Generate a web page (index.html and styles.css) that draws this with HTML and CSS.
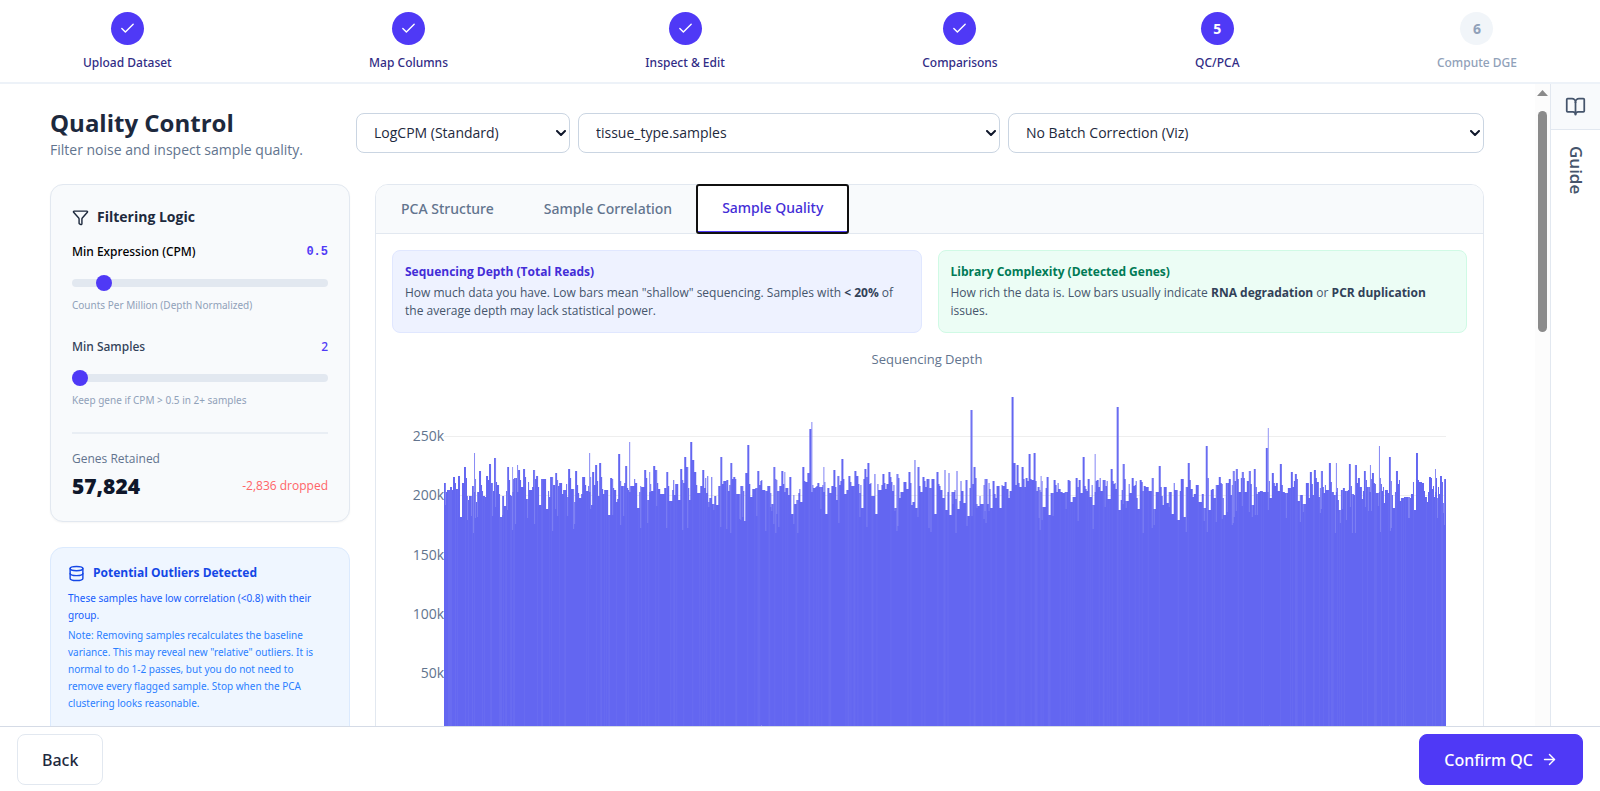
FILE: index.html
```html
<!DOCTYPE html>
<html lang="en">

<head>
	<meta charset="UTF-8">
	<meta name="viewport" content="width=device-width, initial-scale=1">
	<title>Quality Control</title>
	<link rel="stylesheet" href="styles.css">
</head>

<body>
	<header>
		<ol class="steps">
			<li class="step">
				<span class="dot"><svg viewBox="0 0 24 24"><path d="M20 6 9 17l-5-5"/></svg></span>
				<span>Upload Dataset</span>
			</li>
			<li class="step">
				<span class="dot"><svg viewBox="0 0 24 24"><path d="M20 6 9 17l-5-5"/></svg></span>
				<span>Map Columns</span>
			</li>
			<li class="step">
				<span class="dot"><svg viewBox="0 0 24 24"><path d="M20 6 9 17l-5-5"/></svg></span>
				<span>Inspect &amp; Edit</span>
			</li>
			<li class="step">
				<span class="dot"><svg viewBox="0 0 24 24"><path d="M20 6 9 17l-5-5"/></svg></span>
				<span>Comparisons</span>
			</li>
			<li class="step">
				<span class="dot">5</span>
				<span>QC/PCA</span>
			</li>
			<li class="step pending">
				<span class="dot">6</span>
				<span>Compute DGE</span>
			</li>
		</ol>
	</header>

	<div class="workspace">
		<main>
			<div class="topbar">
				<div class="heading">
					<h1>Quality Control</h1>
					<p>Filter noise and inspect sample quality.</p>
				</div>
				<div class="selects">
					<div class="select method">
						<select aria-label="Normalization"><option>LogCPM (Standard)</option></select>
						<svg viewBox="0 0 10 6"><path d="m1 1 4 4 4-4"/></svg>
					</div>
					<div class="select group">
						<select aria-label="Group by"><option>tissue_type.samples</option></select>
						<svg viewBox="0 0 10 6"><path d="m1 1 4 4 4-4"/></svg>
					</div>
					<div class="select batch">
						<select aria-label="Batch correction"><option>No Batch Correction (Viz)</option></select>
						<svg viewBox="0 0 10 6"><path d="m1 1 4 4 4-4"/></svg>
					</div>
				</div>
			</div>

			<div class="columns">
				<aside>
					<section class="card filters">
						<h2>
							<svg class="icon" viewBox="0 0 24 24"><path d="M10 20a1 1 0 0 0 .553.895l2 1A1 1 0 0 0 14 21v-7a2 2 0 0 1 .517-1.341L21.74 4.67A1 1 0 0 0 21 3H3a1 1 0 0 0-.742 1.67l7.225 7.989A2 2 0 0 1 10 14z"/></svg>
							Filtering Logic
						</h2>
						<div class="field">
							<div class="row">
								<label class="strong" for="cpm">Min Expression (CPM)</label>
								<output class="mono" for="cpm">0.5</output>
							</div>
							<input type="range" id="cpm" min="0" max="5" step="0.1" value="0.5">
							<p class="hint">Counts Per Million (Depth Normalized)</p>
						</div>
						<div class="field">
							<div class="row">
								<label for="samples">Min Samples</label>
								<output for="samples">2</output>
							</div>
							<input type="range" id="samples" min="2" max="50" value="2">
							<p class="hint">Keep gene if CPM &gt; 0.5 in 2+ samples</p>
						</div>
						<div class="retained">
							<p>Genes Retained</p>
							<div class="row">
								<strong>57,824</strong>
								<span class="dropped">-2,836 dropped</span>
							</div>
						</div>
					</section>

					<section class="card outliers">
						<h2>
							<svg class="icon" viewBox="0 0 24 24"><ellipse cx="12" cy="5" rx="9" ry="3"/><path d="M3 5v14a9 3 0 0 0 18 0V5"/><path d="M3 12a9 3 0 0 0 18 0"/></svg>
							Potential Outliers Detected
						</h2>
						<p>These samples have low correlation (&lt;0.8) with their group.</p>
						<p class="note">Note: Removing samples recalculates the baseline variance. This may reveal new "relative" outliers. It is normal to do 1-2 passes, but you do not need to remove every flagged sample. Stop when the PCA clustering looks reasonable.</p>
					</section>
				</aside>

				<section class="card results">
					<div class="tabs" role="tablist">
						<button type="button" role="tab">PCA Structure</button>
						<button type="button" role="tab">Sample Correlation</button>
						<button type="button" role="tab" class="active" aria-selected="true">Sample Quality</button>
					</div>
					<div class="panel">
						<div class="infos">
							<div class="info depth">
								<h3>Sequencing Depth (Total Reads)</h3>
								<p>How much data you have. Low bars mean "shallow" sequencing. Samples with <b>&lt; 20%</b> of the average depth may lack statistical power.</p>
							</div>
							<div class="info complexity">
								<h3>Library Complexity (Detected Genes)</h3>
								<p>How rich the data is. Low bars usually indicate <b>RNA degradation</b> or <b>PCR duplication</b> issues.</p>
							</div>
						</div>
						<div class="chart">
							<h4>Sequencing Depth</h4>
							<div class="chart-body">
								<div class="axis">
									<span>250k</span>
									<span>200k</span>
									<span>150k</span>
									<span>100k</span>
									<span>50k</span>
								</div>
								<svg class="plot" viewBox="0 0 1001 356" preserveAspectRatio="none">
									<path class="grid" d="M0 59.5h1001M0 118.5h1001M0 177.5h1001M0 237.5h1001M0 296.5h1001"/>
									<path class="bars-light" id="bars-light"/>
									<path class="bars" id="bars"/>
									<path class="gaps" id="gaps"/>
									<path class="stripes" id="stripes"/>
								</svg>
							</div>
						</div>
					</div>
				</section>
			</div>
		</main>

		<div class="scrollbar">
			<svg viewBox="0 0 11 6"><path d="M5.5 0 11 6H0z"/></svg>
			<div class="thumb"></div>
		</div>

		<aside class="guide">
			<button type="button" aria-label="Open guide">
				<svg viewBox="0 0 24 24"><path d="M12 7v14"/><path d="M3 18a1 1 0 0 1-1-1V4a1 1 0 0 1 1-1h5a4 4 0 0 1 4 4 4 4 0 0 1 4-4h5a1 1 0 0 1 1 1v13a1 1 0 0 1-1 1h-6a3 3 0 0 0-3 3 3 3 0 0 0-3-3z"/></svg>
			</button>
			<span>Guide</span>
		</aside>
	</div>

	<footer>
		<button type="button" class="back">Back</button>
		<button type="button" class="confirm">
			Confirm QC
			<svg viewBox="0 0 24 24"><path d="M5 12h14"/><path d="m12 5 7 7-7 7"/></svg>
		</button>
	</footer>

	<script src="chart.js"></script>
</body>

</html>
```

FILE: styles.css
```css
* {
	box-sizing: border-box;
	margin: 0;
	padding: 0;
}

body {
	display: flex;
	flex-direction: column;
	height: 100vh;
	overflow: hidden;
	background: #fff;
	color: #1d293d;
	font-family: "Segoe UI", "Open Sans", sans-serif;
	font-size: 16px;
	line-height: 20px;
}

button,
select {
	font: inherit;
	color: inherit;
}

/* Medium weight and fine print */
.step,
.field,
.outliers p,
.tabs button,
footer button {
	font-family: "Segoe UI", "Noto Sans", sans-serif;
}

svg {
	fill: none;
	stroke: currentColor;
	stroke-width: 2;
	stroke-linecap: round;
	stroke-linejoin: round;
}

/* Stepper */
.steps {
	display: flex;
	justify-content: space-between;
	padding: 12px 83px 9px;
	border-bottom: 2px solid #edf2f8;
	list-style: none;
}

.step {
	display: flex;
	flex-direction: column;
	align-items: center;
	gap: 8px;
	color: #312c85;
	font-size: 12px;
	font-weight: 500;
}

.dot {
	display: flex;
	align-items: center;
	justify-content: center;
	width: 33px;
	height: 33px;
	border-radius: 50%;
	background: #4f39f6;
	color: #fff;
	font-size: 14px;
	font-weight: 700;
}

.dot svg {
	width: 17px;
}

.pending {
	color: #90a1b9;
}

.pending .dot {
	background: #f1f5f9;
	color: #90a1b9;
}

/* Workspace */
.workspace {
	display: flex;
	flex: 1;
	min-height: 0;
}

main {
	flex: 1;
	min-width: 0;
	padding: 22px 51px 0 50px;
	overflow: hidden;
}

.topbar {
	display: flex;
	align-items: center;
	margin-bottom: 24px;
}

.heading {
	width: 306px;
}

h1 {
	font-size: 24px;
	line-height: 34px;
}

.heading p {
	color: #62748e;
	font-size: 14px;
}

.selects {
	display: flex;
	flex: 1;
	gap: 8px;
}

.select {
	display: grid;
	align-items: center;
}

.select > * {
	grid-area: 1 / 1;
}

.select svg {
	justify-self: end;
	width: 10px;
	margin-right: 4px;
	color: #0f172b;
	pointer-events: none;
}

.method {
	flex: 214;
}

.group {
	flex: 422;
}

.batch {
	flex: 476;
}

select {
	width: 100%;
	height: 40px;
	padding: 0 17px;
	appearance: none;
	border: 1px solid #cad5e2;
	border-radius: 8px;
	background: #fff;
	font-size: 14px;
}

.columns {
	display: flex;
	align-items: flex-start;
	gap: 25px;
}

.columns aside {
	display: flex;
	flex-direction: column;
	flex: none;
	gap: 25px;
	width: 300px;
}

.card {
	border: 1px solid #e2e8f0;
	border-radius: 13px;
}

.icon {
	flex: none;
	width: 17px;
	height: 17px;
}

.row {
	display: flex;
	align-items: center;
	justify-content: space-between;
}

/* Filters */
.filters {
	padding: 22px 21px 18px;
	background: #f8fafc;
	box-shadow: 0 1px 2px #0000000a;
}

.filters h2 {
	display: flex;
	align-items: center;
	gap: 8px;
	margin-bottom: 15px;
	font-size: 14px;
	line-height: 20px;
}

.field {
	display: flex;
	flex-direction: column;
	margin-bottom: 22px;
	color: #314158;
	font-size: 12px;
}

.strong {
	color: #000;
}

label {
	font-weight: 500;
}

output {
	color: #4f39f6;
	font-weight: 500;
}

.mono {
	font-family: "Liberation Mono", monospace;
	font-weight: 700;
}

input[type="range"] {
	height: 8px;
	margin: 17px 0 8px;
	appearance: none;
	border-radius: 4px;
	background: #e2e8f0;
}

input[type="range"]::-webkit-slider-thumb {
	width: 16px;
	height: 16px;
	appearance: none;
	border-radius: 50%;
	background: #4f39f6;
}

.hint {
	color: #90a1b9;
	font-size: 10px;
}

.retained {
	padding-top: 15px;
	border-top: 2px solid #e9eef4;
	color: #62748e;
	font-size: 12px;
}

.retained .row {
	height: 34px;
}

.retained strong {
	color: #0f172b;
	font-size: 21px;
	font-weight: 800;
}

.dropped {
	color: #ff6467;
}

/* Outliers */
.outliers {
	padding: 15px 25px 25px 17px;
	border-color: #dbeafe;
	background: #eff6ff;
	color: #155dfc;
	font-size: 10px;
	line-height: 17px;
}

.outliers h2 {
	display: flex;
	align-items: center;
	gap: 8px;
	margin-bottom: 7px;
	color: #1447e6;
	font-size: 12px;
	line-height: 20px;
}

.outliers p {
	margin-bottom: 3px;
}

.outliers .note {
	color: #2b7fff;
}

/* Results */
.results {
	flex: 1;
	min-width: 0;
}

.tabs {
	display: flex;
	border-bottom: 1px solid #e2e8f0;
	border-radius: 12px 12px 0 0;
	background: #f8fafc;
}

.tabs button {
	height: 48px;
	padding: 0 25px;
	border: 0;
	background: none;
	color: #62748e;
	font-size: 14px;
	font-weight: 500;
}

.tabs .active {
	border-bottom: 2px solid #4f39f6;
	border-radius: 2px;
	outline: 2px solid #101010;
	outline-offset: -1px;
	background: #fff;
	color: #432dd7;
}

.panel {
	padding: 16px;
}

.infos {
	display: grid;
	grid-template-columns: 1fr 1fr;
	gap: 16px;
}

.info {
	padding: 12px;
	border: 1px solid;
	border-radius: 8px;
	color: #45556c;
	font-size: 12px;
	line-height: 18px;
}

.info h3 {
	margin-bottom: 3px;
	font-size: 12px;
}

.info b {
	color: #314158;
}

.depth {
	border-color: #e0e7ff;
	background: #eef2ff;
}

.depth h3 {
	color: #432dd7;
}

.complexity {
	border-color: #d0fae5;
	background: #ecfdf5;
}

.complexity h3 {
	color: #007a55;
}

/* Chart */
.chart {
	padding: 16px 21px 0 16px;
	color: #62748e;
	font-family: "Open Sans", verdana, sans-serif;
}

.chart h4 {
	font-size: 13px;
	font-weight: 400;
	text-align: center;
}

.chart-body {
	display: flex;
	height: 364px;
	padding-top: 8px;
}

.axis {
	display: flex;
	flex-direction: column;
	justify-content: space-between;
	width: 36px;
	height: 306px;
	padding-top: 49px;
	font-size: 14px;
	text-align: right;
}

.plot {
	flex: 1;
	min-width: 0;
	height: 356px;
	stroke: none;
}

.grid {
	stroke: #eee;
	stroke-width: 1;
}

.bars {
	fill: #6366f1;
}

.bars-light {
	fill: #8587f4;
}

.gaps {
	fill: #fff;
	fill-opacity: 0.18;
}

.stripes {
	fill: #fff;
	fill-opacity: 0.04;
}

/* Scrollbar */
.scrollbar {
	display: flex;
	flex-direction: column;
	align-items: center;
	gap: 15px;
	width: 15px;
	padding-top: 6px;
	background: #fcfcfc;
}

.scrollbar svg {
	width: 11px;
	height: 6px;
	fill: #8b8b8b;
	stroke: none;
}

.thumb {
	width: 9px;
	height: 221px;
	border-radius: 5px;
	background: #8b8b8b;
}

/* Guide */
.guide {
	display: flex;
	flex-direction: column;
	align-items: center;
	gap: 16px;
	width: 50px;
	border-left: 1px solid #e2e8f0;
	color: #45556c;
	font-size: 17px;
	font-weight: 600;
}

.guide button {
	width: 100%;
	height: 46px;
	border: 0;
	border-bottom: 1px solid #e2e8f0;
	background: #f8fafc;
}

.guide svg {
	width: 21px;
	height: 21px;
	margin-top: 4px;
}

.guide span {
	writing-mode: vertical-rl;
}

/* Footer */
footer {
	display: flex;
	align-items: center;
	justify-content: space-between;
	padding: 7px 17px 6px;
	border-top: 1px solid #d5dbe6;
}

footer button {
	display: flex;
	align-items: center;
	gap: 8px;
	height: 51px;
	padding: 0 24px;
	border: 1px solid #e2e8f0;
	border-radius: 8px;
	background: #fff;
	font-size: 16px;
	font-weight: 500;
}

footer .confirm {
	border-color: #4f39f6;
	background: #4f39f6;
	color: #fff;
}

footer svg {
	width: 17px;
}
```

FILE: chart.js
```js
// [position along the axis, reads in thousands]
const marks = [
	[1,211],[10,216],[15,217],[17,182],[21,224],[30,236],[36,221],[43,217],[46,227],[51,232],[57,182],[61,191],
	[64,224],[68,224],[73,226],[75,222],[80,223],[90,222],[93,217],[96,192],[103,189],[107,216],[112,219],
	[125,223],[132,221],[136,198],[140,216],[145,236],[149,220],[152,226],[156,228],[165,184],[167,215],[175,235],
	[182,225],[185,245],[192,211],[194,190],[201,222],[205,220],[210,225],[212,222],[223,220],[237,223],[241,233],
	[243,224],[247,245],[249,230],[251,220],[259,222],[266,198],[277,233],[287,228],[290,216],[301,179],[302,219],
	[304,243],[307,199],[314,221],[330,224],[338,221],[340,220],[346,216],[348,185],[359,224],[364,219],[366,256],
	[367,262],[379,224],[382,185],[390,222],[394,217],[398,231],[405,217],[411,221],[413,217],[418,190],[421,223],
	[424,228],[431,218],[432,185],[439,218],[445,220],[451,190],[453,218],[465,220],[471,230],[472,190],[474,224],
	[479,216],[488,214],[491,185],[493,220],[501,222],[502,188],[505,219],[506,184],[513,221],[514,189],[522,213],
	[524,183],[527,272],[530,224],[534,191],[541,214],[547,190],[553,208],[556,190],[568,283],[570,228],[573,226],
	[578,224],[582,215],[585,235],[590,236],[596,217],[603,216],[605,184],[610,213],[624,213],[632,215],[639,233],
	[650,235],[653,213],[659,213],[667,223],[673,275],[675,188],[679,227],[688,215],[694,189],[696,213],[708,215],
	[710,189],[715,225],[728,185],[734,180],[737,214],[740,182],[744,228],[760,190],[762,242],[765,188],[775,216],
	[780,184],[789,221],[792,223],[798,220],[805,221],[810,223],[822,240],[823,257],[828,219],[836,227],[847,220],
	[851,218],[866,220],[870,222],[877,221],[885,228],[891,228],[895,188],[905,227],[911,226],[920,221],[925,226],
	[928,219],[934,242],[945,233],[949,190],[952,221],[970,188],[972,236],[985,216],[990,223],[996,217],[1000,214]
];

// Narrow bars that are drawn lighter
const thin = [30, 68, 73, 145, 185, 205, 340, 367, 379, 596, 650, 823, 891, 925, 934, 990];

const width = 1001;
const base = 356;
const barTop = (k) => Math.round(base - k * 1.186);

let seed = 7;
function random() {
	seed = (seed * 16807) % 2147483647;
	return seed / 2147483647;
}

// Samples without a mark sit around the 200k average
const reads = [];
while (reads.length < width) {
	const value = 190 + (random() + random()) * 14;
	const run = 1 + Math.floor(random() * 3);
	for (let i = 0; i < run; i++) {
		reads.push(value);
	}
}
marks.forEach(([x, k]) => {
	reads[x] = k;
	if (!thin.includes(x)) {
		reads[x - 1] = k;
	}
	// Tall samples have raised neighbours
	if (k > 212) {
		reads[x + 1] = 206 + random() * 10;
	}
});

let bars = "";
let light = "";
let gaps = "";
let stripes = "";
for (let x = 0; x < width; x++) {
	const y = barTop(reads[x]);
	if (thin.includes(x)) {
		light += `M${x} ${y}h1V${base}h-1z`;
		bars += `M${x} ${barTop(203)}h1V${base}h-1z`;
	} else {
		bars += `M${x} ${y}h1V${base}h-1z`;
	}
	const r = random();
	if (r < 0.12) {
		gaps += `M${x} ${y}h1V${barTop(168 + random() * 25)}h-1z`;
	}
	if (r > 0.8) {
		stripes += `M${x} ${y}h1V${base}h-1z`;
	}
}

document.getElementById("bars").setAttribute("d", bars);
document.getElementById("bars-light").setAttribute("d", light);
document.getElementById("gaps").setAttribute("d", gaps);
document.getElementById("stripes").setAttribute("d", stripes);
```
